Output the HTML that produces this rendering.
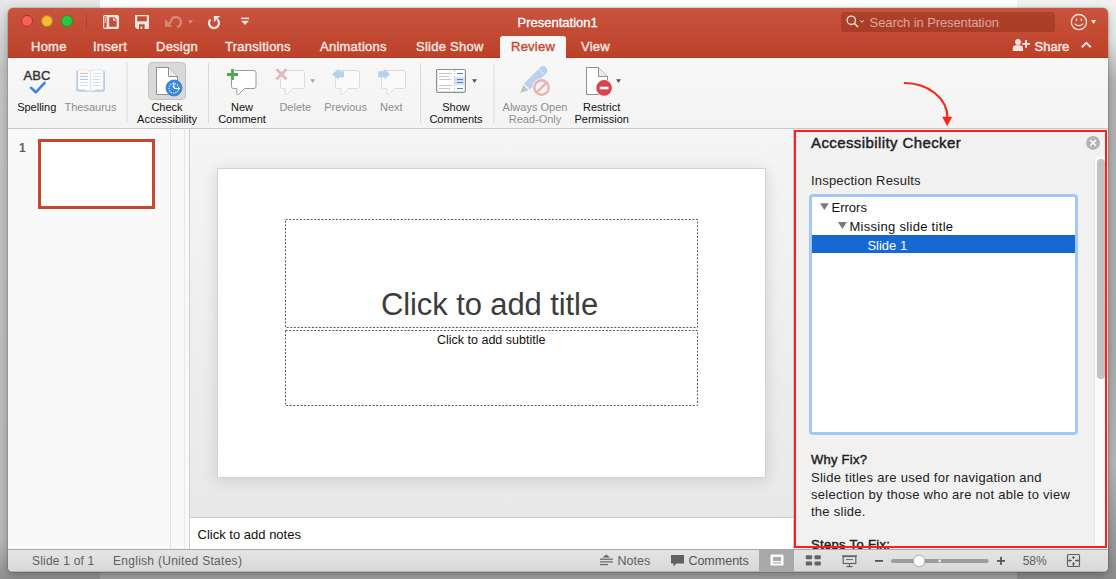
<!DOCTYPE html>
<html><head><meta charset="utf-8">
<style>
*{box-sizing:border-box;margin:0;padding:0}
html,body{width:1116px;height:579px;overflow:hidden;position:relative;font-family:"Liberation Sans",sans-serif;}
body{background:#e9e9e9;}
.a{position:absolute;white-space:nowrap}
#bgL{left:0;top:0;width:100px;height:579px;background:linear-gradient(#e8e8e8 0%,#d8d8d8 5%,#c4c4c4 12%,#bababa 93%,#909090 100%)}
#bgR{left:100px;top:0;width:917px;height:579px;background:linear-gradient(#fefefe 0%,#f6f6f6 20%,#c8c8c8 60%,#a2a2a2 100%)}
#bgR2{left:1017px;top:0;width:99px;height:579px;background:linear-gradient(#f2f2f2 0%,#e6e6e6 7%,#b4b4b4 14%,#acacac 60%,#b6b6b6 80%,#8c8c8c 100%)}
#win{left:8px;top:8px;width:1100px;height:564px;border-radius:5px;overflow:hidden;background:#f4f4f4;box-shadow:0 0 0 0.5px rgba(0,0,0,.22),0 3px 10px rgba(0,0,0,.28)}
#hdr{left:0;top:0;width:1100px;height:50px;background:linear-gradient(#c8543d,#bd4129);border-bottom:1px solid #a9391f}
.tab{top:31px;font-size:13px;font-weight:400;color:#f8e6e0;-webkit-text-stroke:0.4px #f8e6e0;letter-spacing:0.25px}
.rl{font-size:11px;color:#111;text-align:center;line-height:12px}
.dis{color:#8d8d8d}
.sep{width:1px;background:#dcdcdc}
</style></head><body>
<div id="bgL" class="a"></div>
<div id="bgR" class="a"></div>
<div id="bgR2" class="a"></div>
<div id="win" class="a">
  <div id="hdr" class="a"></div>
  <!-- traffic lights -->
  <div class="a" style="left:12.7px;top:6.5px;width:12.5px;height:12.5px;border-radius:50%;background:#fd5d55;border:1px solid #a5372c"></div>
  <div class="a" style="left:32.7px;top:6.5px;width:12.5px;height:12.5px;border-radius:50%;background:#feba2f;border:1px solid #b0822a"></div>
  <div class="a" style="left:52.7px;top:6.5px;width:12.5px;height:12.5px;border-radius:50%;background:#28c73f;border:1px solid #22952f"></div>
  <div class="a" style="left:78px;top:6px;width:1px;height:16px;background:rgba(0,0,0,.12)"></div>
  <div class="a" style="left:509.5px;top:8.1px;font-size:13px;color:#fff;line-height:13px;-webkit-text-stroke:0.3px #fff">Presentation1</div>

  <!-- QAT icons (abs coords minus 8) -->
  <svg class="a" style="left:0;top:0" width="260" height="30" viewBox="8 8 260 30">
    <g fill="#f7e4df">
      <rect x="103" y="15" width="16" height="14" rx="2"/>
    </g>
    <g fill="#c24c35">
      <rect x="104.3" y="16.3" width="2.3" height="11.4"/>
      <path d="M109.2 17.3 H114.4 L116.6 19.5 V26.7 H109.2 Z"/>
    </g>
    <g fill="#f7e4df">
      <circle cx="105.4" cy="17.7" r="0.7"/><circle cx="105.4" cy="19.8" r="0.7"/><circle cx="105.4" cy="21.9" r="0.7"/>
      <path d="M113 17.6 V20 Q113 20.8 113.8 20.8 H116.3 Z"/>
    </g>
    <path fill="#f7e4df" d="M135 16 Q135 15 136 15 H148 Q149 15 149 16 V28 Q149 29 148 29 H137 L135 27 Z"/>
    <g fill="#c24c35">
      <rect x="137.2" y="16.3" width="9.6" height="5"/>
      <rect x="139" y="24.3" width="5.6" height="4.7"/>
    </g>
    <rect x="140.6" y="26.5" width="1.6" height="2.5" fill="#f7e4df"/>
    <g fill="none" stroke="rgba(247,228,223,.38)" stroke-width="2.2">
      <path d="M169.5 23.5 L171 21 A5 5 0 1 1 176.8 27"/>
    </g>
    <path fill="rgba(247,228,223,.38)" d="M165 19 L165 26.7 L172.6 26.7 Z"/>
    <path fill="rgba(247,228,223,.38)" d="M188 20.2 H193 L190.5 24 Z"/>
    <g fill="none" stroke="#f7e4df" stroke-width="2.3">
      <path d="M210.5 19.5 A5 5 0 1 0 217.5 19.5"/>
    </g>
    <path fill="#f7e4df" d="M213.9 15.9 L220.3 15.9 L213.9 22.3 Z"/>
    <rect x="241" y="17.6" width="8" height="1.5" fill="#f7e4df"/>
    <path fill="#f7e4df" d="M241 20.7 H249 L245 25 Z"/>
  </svg>

  <!-- search / share -->
  <div class="a" style="left:833.3px;top:4.2px;width:213.5px;height:19.5px;border-radius:3.5px;background:rgba(110,25,10,.3)"></div>
  <svg class="a" style="left:0;top:0" width="1100" height="50" viewBox="8 8 1100 50">
    <circle cx="851.3" cy="20.3" r="4.2" fill="none" stroke="#f4e2dc" stroke-width="1.3"/>
    <path d="M854.3 23.3 L858 27" stroke="#f4e2dc" stroke-width="1.6"/>
    <path d="M860.2 20.5 L862 22.2 L863.8 20.5" fill="none" stroke="#f4e2dc" stroke-width="1"/>
    <circle cx="1078.9" cy="22.1" r="7.6" fill="none" stroke="#f7e4df" stroke-width="1.3"/>
    <rect x="1075.8" y="18.6" width="1.3" height="2.6" rx="0.6" fill="#f7e4df"/>
    <rect x="1080.7" y="18.6" width="1.3" height="2.6" rx="0.6" fill="#f7e4df"/>
    <path d="M1074.6 23.6 Q1078.9 27.8 1083.2 23.6" fill="none" stroke="#f7e4df" stroke-width="1.2"/>
    <path d="M1091 20 H1096.2 L1093.6 23.9 Z" fill="#f7e4df"/>
    <circle cx="1018" cy="42" r="2.9" fill="#f7e4df"/>
    <path d="M1012.8 51 V48.2 Q1012.8 45.3 1016 45.3 H1019.8 Q1023 45.3 1023 48.2 V51 Z" fill="#f7e4df"/>
    <path d="M1022.2 43.8 H1030 M1026.1 39.9 V47.7" stroke="#f7e4df" stroke-width="1.8"/>
    <path d="M1081.8 47.2 L1086.3 42.8 L1090.8 47.2" fill="none" stroke="#f7e4df" stroke-width="2"/>
  </svg>
  <div class="a" style="left:861.6px;top:7.7px;font-size:13px;color:#e0a596;line-height:13px;letter-spacing:-0.1px">Search in Presentation</div>
  <div class="a" style="left:1026.6px;top:32.4px;font-size:13px;color:#f8e6e0;line-height:13px;-webkit-text-stroke:0.45px #f8e6e0">Share</div>
  <!-- tabs -->
  <div class="a tab" style="left:23px">Home</div>
  <div class="a tab" style="left:85px">Insert</div>
  <div class="a tab" style="left:148px">Design</div>
  <div class="a tab" style="left:217px">Transitions</div>
  <div class="a tab" style="left:312px">Animations</div>
  <div class="a tab" style="left:408px">Slide Show</div>
  <div class="a" style="left:492px;top:28px;width:66px;height:22px;background:#f7f7f7;border-radius:3px 3px 0 0"></div>
  <div class="a tab" style="left:503px;color:#c54a31;-webkit-text-stroke:0.4px #c54a31">Review</div>
  <div class="a tab" style="left:573px">View</div>

  <!-- ribbon -->
  <div id="rib" class="a" style="left:0;top:50px;width:1100px;height:71px;background:linear-gradient(#f7f7f7,#f4f4f4);border-bottom:1px solid #c9c9c9"></div>


  <!-- ribbon content -->
  <svg class="a" style="left:0;top:50px" width="1100" height="70" viewBox="8 58 1100 70">
    <!-- separators -->
    <g fill="#dadada">
      <rect x="126.5" y="63" width="1" height="60"/>
      <rect x="208" y="63" width="1" height="60"/>
      <rect x="420" y="63" width="1" height="60"/>
      <rect x="493.5" y="63" width="1" height="60"/>
    </g>
    <!-- spelling check -->
    <path d="M31 87.8 L35.8 92.3 L44.5 83" fill="none" stroke="#3f86d6" stroke-width="2.6" stroke-linecap="round" stroke-linejoin="round"/>
    <!-- thesaurus -->
    <rect x="76.2" y="70.5" width="28.8" height="21.2" rx="2" fill="#b9cde6"/>
    <path d="M78 70 Q84 69 90.4 71 Q97 69 103.2 70 V89.8 Q97 89 90.4 91.2 Q84 89 78 89.8 Z" fill="#fdfdfd" stroke="#d7dbe0" stroke-width="0.6"/>
    <line x1="90.4" y1="71" x2="90.4" y2="91" stroke="#d0d4da" stroke-width="0.8"/>
    <g stroke-width="1">
      <line x1="80" y1="73.4" x2="88" y2="73.4" stroke="#e3a9ad"/>
      <line x1="80" y1="76.4" x2="88" y2="76.4" stroke="#aac4e6"/>
      <line x1="80" y1="79.4" x2="88" y2="79.4" stroke="#aac4e6"/>
      <line x1="80" y1="82.4" x2="88" y2="82.4" stroke="#dcdcdc"/>
      <line x1="80" y1="85.4" x2="88" y2="85.4" stroke="#dcdcdc"/>
      <line x1="93" y1="73.4" x2="101" y2="73.4" stroke="#dcdcdc"/>
      <line x1="93" y1="76.4" x2="101" y2="76.4" stroke="#dcdcdc"/>
      <line x1="93" y1="79.4" x2="101" y2="79.4" stroke="#dcdcdc"/>
      <line x1="93" y1="82.4" x2="101" y2="82.4" stroke="#dcdcdc"/>
      <line x1="93" y1="85.4" x2="101" y2="85.4" stroke="#dcdcdc"/>
    </g>
    <!-- check accessibility -->
    <rect x="148.5" y="62.5" width="37" height="37" rx="4" fill="#d9d9d9" stroke="#c2c2c2" stroke-width="1"/>
    <path d="M156.5 67.5 H168.5 L177.5 76.5 V94.5 H156.5 Z" fill="#fff" stroke="#8f8f8f" stroke-width="1"/>
    <path d="M168.5 67.5 V76.5 H177.5" fill="#eee" stroke="#8f8f8f" stroke-width="1"/>
    <circle cx="174" cy="88" r="8" fill="#3b8ad9" stroke="#2f78c4" stroke-width="0.8"/>
    <circle cx="173.8" cy="88.3" r="4.8" fill="none" stroke="#fff" stroke-width="1.1" stroke-dasharray="1.3 1" stroke-opacity="0.85"/>
    <path d="M173.8 82.2 V88" fill="none" stroke="#fff" stroke-width="1.1"/>
    <path d="M172.3 86.4 L173.8 88.4 L175.3 86.4 Z" fill="#fff"/>
    <path d="M174 88.5 H179.2" fill="none" stroke="#fff" stroke-width="1.1"/>
    <path d="M178.2 86.8 L180.4 88.5 L178.2 90.2 Z" fill="#fff"/>
    <!-- bubbles -->
    <g fill="#fff" stroke="#9b9b9b" stroke-width="1">
      <path d="M233.5 70.5 H254 Q256 70.5 256 72.5 V86.5 Q256 88.5 254 88.5 H244.5 L238.5 94.5 Q237 95 236.8 93.5 V88.5 H233.5 Q231.5 88.5 231.5 86.5 V72.5 Q231.5 70.5 233.5 70.5 Z"/>
    </g>
    <g fill="#fafafa" stroke="#dcdcdc" stroke-width="1">
      <path d="M282.5 70.5 H302.5 Q304.5 70.5 304.5 72.5 V86.5 Q304.5 88.5 302.5 88.5 H293 L287 94.5 Q285.5 95 285.3 93.5 V88.5 H282.5 Q280.5 88.5 280.5 86.5 V72.5 Q280.5 70.5 282.5 70.5 Z"/>
      <path d="M337.5 70.5 H357.5 Q359.5 70.5 359.5 72.5 V86.5 Q359.5 88.5 357.5 88.5 H348.5 L342.5 94.5 Q341 95 340.8 93.5 V88.5 H337.5 Q335.5 88.5 335.5 86.5 V72.5 Q335.5 70.5 337.5 70.5 Z"/>
      <path d="M383.5 70.5 H403.5 Q405.5 70.5 405.5 72.5 V86.5 Q405.5 88.5 403.5 88.5 H394.5 L388.5 94.5 Q387 95 386.8 93.5 V88.5 H383.5 Q381.5 88.5 381.5 86.5 V72.5 Q381.5 70.5 383.5 70.5 Z"/>
    </g>
    <!-- green plus -->
    <g stroke="#fff" stroke-width="5"><line x1="227" y1="74.5" x2="238" y2="74.5"/><line x1="232.5" y1="69" x2="232.5" y2="80"/></g>
    <g stroke="#4da84d" stroke-width="2.8"><line x1="227" y1="74.5" x2="238" y2="74.5"/><line x1="232.5" y1="69" x2="232.5" y2="80"/></g>
    <!-- pink X -->
    <g stroke="#f7f7f7" stroke-width="4.5"><line x1="276.5" y1="69.3" x2="286.5" y2="79.3"/><line x1="286.5" y1="69.3" x2="276.5" y2="79.3"/></g>
    <g stroke="#e9b5b8" stroke-width="2.8"><line x1="276.5" y1="69.3" x2="286.5" y2="79.3"/><line x1="286.5" y1="69.3" x2="276.5" y2="79.3"/></g>
    <path d="M310.2 79.2 H315.2 L312.7 82.9 Z" fill="#a8a8a8"/>
    <!-- prev/next arrows -->
    <path d="M332 74.3 L338.7 68.8 V71.3 H344 V77.3 H338.7 V79.8 Z" fill="#b6d0ee"/>
    <path d="M390.1 74.3 L384.4 68.8 V71.3 H378.2 V77.3 H384.4 V79.8 Z" fill="#b6d0ee"/>
    <!-- show comments -->
    <rect x="436.6" y="69.5" width="28.8" height="22.8" rx="1.5" fill="#fff" stroke="#8e8e8e" stroke-width="1.2"/>
    <rect x="454.5" y="77.3" width="10.5" height="7.5" fill="#cfe0f5"/>
    <line x1="454.5" y1="70" x2="454.5" y2="92" stroke="#a0a0a0" stroke-width="0.6" stroke-dasharray="1.5 1.5"/>
    <g stroke="#c6c6c6" stroke-width="1">
      <line x1="439" y1="73.5" x2="452" y2="73.5"/><line x1="439" y1="76.5" x2="449" y2="76.5"/>
      <line x1="439" y1="79.5" x2="451" y2="79.5"/><line x1="439" y1="85.5" x2="452" y2="85.5"/>
      <line x1="439" y1="88.5" x2="450" y2="88.5"/>
    </g>
    <g stroke="#3f86d6" stroke-width="1.1">
      <line x1="457" y1="73.5" x2="463" y2="73.5"/><line x1="457" y1="79.5" x2="463" y2="79.5"/>
      <line x1="457" y1="82.5" x2="463" y2="82.5"/><line x1="457" y1="88.5" x2="463" y2="88.5"/>
    </g>
    <path d="M472 79.2 H477 L474.5 82.9 Z" fill="#555"/>
    <!-- pencil -->
    <path d="M524.5 83.5 L540.5 67.5 Q543.5 65 546 67.8 Q548.5 70.5 546 73.2 L530 89 Z" fill="#b9d3ef" stroke="#a9c4e4" stroke-width="0.5"/>
    <line x1="538.8" y1="69.2" x2="544.3" y2="74.7" stroke="#eef3f8" stroke-width="1"/>
    <line x1="523.8" y1="84.2" x2="529.3" y2="89.7" stroke="#eef3f8" stroke-width="1"/>
    <path d="M523.3 84.9 L528.6 90.2 L520.2 93 Z" fill="#c4c4c4"/>
    <circle cx="541.5" cy="87.6" r="9.3" fill="#f7f7f7"/>
    <circle cx="541.5" cy="87.6" r="7.2" fill="#f5f5f5" stroke="#ebb5b8" stroke-width="2.6"/>
    <line x1="546.5" y1="82.6" x2="536.5" y2="92.6" stroke="#ebb5b8" stroke-width="2.6"/>
    <!-- restrict permission -->
    <path d="M586.5 67.5 H598.5 L607.5 76.5 V94.5 H586.5 Z" fill="#fff" stroke="#8f8f8f" stroke-width="1"/>
    <path d="M598.5 67.5 V76.5 H607.5" fill="#ececec" stroke="#8f8f8f" stroke-width="1"/>
    <circle cx="604.1" cy="87.9" r="8.5" fill="#f7f7f7"/>
    <circle cx="604.1" cy="87.9" r="7.8" fill="#d9434b"/>
    <rect x="599.7" y="86.7" width="8.8" height="2.6" fill="#fff"/>
    <path d="M616 79.2 H621 L618.5 82.9 Z" fill="#555"/>
  </svg>
  <div class="a" style="left:15.6px;top:61.2px;font-size:13px;color:#333;line-height:13px;-webkit-text-stroke:0.4px #333">ABC</div>
  <div class="a rl" style="left:-11.3px;top:93px;width:80px">Spelling</div>
  <div class="a rl dis" style="left:42.5px;top:93px;width:80px">Thesaurus</div>
  <div class="a rl" style="left:119px;top:93px;width:80px">Check<br>Accessibility</div>
  <div class="a rl" style="left:194px;top:93px;width:80px">New<br>Comment</div>
  <div class="a rl dis" style="left:247.3px;top:93px;width:80px">Delete</div>
  <div class="a rl dis" style="left:297.6px;top:93px;width:80px">Previous</div>
  <div class="a rl dis" style="left:343.3px;top:93px;width:80px">Next</div>
  <div class="a rl" style="left:408px;top:93px;width:80px">Show<br>Comments</div>
  <div class="a rl dis" style="left:487px;top:93px;width:80px">Always Open<br>Read-Only</div>
  <div class="a rl" style="left:553.7px;top:93px;width:80px">Restrict<br>Permission</div>
  <!-- main -->
  <div class="a" style="left:0;top:121px;width:163px;height:420px;background:#f9f9f9"></div>
  <div class="a" style="left:162px;top:121px;width:1px;height:420px;background:#e2e2e2"></div>
  <div class="a" style="left:163px;top:121px;width:18px;height:420px;background:#f9f9f9"></div>
  <div class="a" style="left:176px;top:121px;width:1px;height:420px;background:#e8e8e8"></div>
  <div class="a" style="left:181px;top:121px;width:1px;height:420px;background:#cfcfcf"></div>
  <div class="a" style="left:182px;top:121px;width:603px;height:388px;background:linear-gradient(#f5f5f5,#e8e8e8)"></div>
  <div class="a" style="left:182px;top:509px;width:603px;height:32px;background:#fff;border-top:1px solid #c9c9c9"></div>
  <div class="a" style="left:785px;top:121px;width:315px;height:420px;background:#f1f1f1;border-left:1px solid #c9c9c9"></div>


  <!-- thumbnails -->
  <div class="a" style="left:11px;top:134px;font-size:12px;font-weight:700;color:#5c5c5c;line-height:12px">1</div>
  <div class="a" style="left:30px;top:131px;width:117px;height:70px;border:3px solid #c8452e;background:#fff"></div>
  <!-- slide -->
  <div class="a" style="left:209px;top:160px;width:549px;height:310px;background:#fff;border:1px solid #d2d2d2;box-shadow:0 2px 14px rgba(0,0,0,.13)"></div>
  <svg class="a" style="left:0;top:0" width="1100" height="564" viewBox="8 8 1100 564">
    <g fill="none" stroke="#5a5a5a" stroke-width="1" stroke-dasharray="2 1.6">
      <rect x="285.5" y="219.5" width="412" height="108"/>
      <rect x="285.5" y="330.5" width="412" height="75"/>
    </g>
  </svg>
  <div id="ttl" class="a" style="left:373px;top:281px;font-size:31px;color:#3c3c3c;line-height:31px;letter-spacing:-0.1px">Click to add title</div>
  <div id="sub" class="a" style="left:429px;top:326px;font-size:12.5px;color:#111;line-height:12px">Click to add subtitle</div>
  <div class="a" style="left:189.6px;top:520px;font-size:13px;color:#111;line-height:13px">Click to add notes</div>

  <!-- accessibility panel -->
  <div class="a" style="left:803px;top:128px;font-size:15px;color:#222;line-height:14px;letter-spacing:0.4px;-webkit-text-stroke:0.45px #222">Accessibility Checker</div>
  <svg class="a" style="left:1077px;top:127px" width="16" height="16" viewBox="0 0 16 16">
    <circle cx="8.1" cy="7.9" r="7" fill="#b4b4b4"/>
    <path d="M5.3 5.1 L10.9 10.7 M10.9 5.1 L5.3 10.7" stroke="#fff" stroke-width="1.6"/>
  </svg>
  <div class="a" style="left:1086px;top:148px;width:11px;height:392px;background:#fafafa;border-left:1px solid #e6e6e6"></div>
  <div class="a" style="left:1089px;top:151px;width:7.5px;height:220px;background:#c2c2c2;border-radius:4px"></div>
  <div class="a" style="left:803px;top:166px;font-size:13px;color:#222;line-height:13px;letter-spacing:0.2px">Inspection Results</div>
  <div class="a" style="left:800.6px;top:185.6px;width:269.4px;height:241px;border:3.4px solid #a3c8f4;border-radius:4px;background:#fff"></div>
  <div class="a" style="left:804px;top:227px;width:262.5px;height:17.5px;background:#1868d1"></div>
  <svg class="a" style="left:800px;top:190px" width="60" height="40" viewBox="808 198 60 40">
    <path d="M820 203.3 H828.8 L824.4 210 Z" fill="#7a7a7a"/>
    <path d="M838 222 H846.8 L842.4 229 Z" fill="#7a7a7a"/>
  </svg>
  <div class="a" style="left:823.5px;top:193px;font-size:13px;color:#111;line-height:13px">Errors</div>
  <div class="a" style="left:841.4px;top:212px;font-size:13px;color:#111;line-height:13px;letter-spacing:0.3px">Missing slide title</div>
  <div class="a" style="left:859.4px;top:230.5px;font-size:13px;color:#fff;line-height:13px">Slide 1</div>
  <div class="a" style="left:803px;top:445px;font-size:13px;color:#222;line-height:13px;letter-spacing:0.25px;-webkit-text-stroke:0.45px #222">Why Fix?</div>
  <div class="a" style="left:803px;top:460.8px;font-size:13px;color:#222;line-height:17px;letter-spacing:0.26px">Slide titles are used for navigation and<br>selection by those who are not able to view<br>the slide.</div>
  <div class="a" style="left:803px;top:530px;font-size:13px;color:#222;line-height:13px;letter-spacing:0.33px;-webkit-text-stroke:0.45px #222">Steps To Fix:</div>
  <!-- status -->
  <div class="a" style="left:0;top:541px;width:1100px;height:23px;background:linear-gradient(#e4e4e4,#d8d8d8);border-top:1px solid #a9a9a9;box-shadow:inset 0 -1px 0 #b4b4b4"></div>

  <div class="a" style="left:24px;top:547px;font-size:12px;color:#606060;line-height:12px;letter-spacing:0.2px">Slide 1 of 1</div>
  <div class="a" style="left:105px;top:547px;font-size:12px;color:#606060;line-height:12px;letter-spacing:0.28px">English (United States)</div>
  <div class="a" style="left:751px;top:542px;width:35px;height:22px;background:#a9a9a9"></div>
  <svg class="a" style="left:0;top:541px" width="1100" height="23" viewBox="8 549 1100 23">
    <!-- notes icon -->
    <g fill="#666">
      <path d="M602.5 557.5 L606.3 554.5 L610 557.5 Z"/>
      <rect x="600" y="558.6" width="13" height="1.2"/>
      <rect x="600" y="561.3" width="13" height="1.2"/>
      <rect x="600" y="564" width="8" height="1.2"/>
    </g>
    <!-- comments icon -->
    <path d="M671 555 H684 V563.5 H676.5 L673.5 566.5 V563.5 H671 Z" fill="#616161"/>
    <!-- normal view icon -->
    <rect x="770.5" y="554.5" width="13" height="11" rx="1.2" fill="#fff"/>
    <rect x="773" y="557" width="8" height="4" fill="#a9a9a9"/>
    <rect x="773" y="562.3" width="8" height="1.2" fill="#a9a9a9"/>
    <!-- sorter -->
    <g fill="#646464">
      <rect x="805.8" y="555.3" width="6.3" height="4" rx="1"/><rect x="814.5" y="555.3" width="6.3" height="4" rx="1"/>
      <rect x="805.8" y="561.6" width="6.3" height="4" rx="1"/><rect x="814.5" y="561.6" width="6.3" height="4" rx="1"/>
    </g>
    <!-- presenter -->
    <g fill="none" stroke="#646464" stroke-width="1.2">
      <rect x="843.2" y="556.5" width="12.6" height="7"/>
      <line x1="849.5" y1="563.5" x2="849.5" y2="566.5"/>
      <line x1="846.5" y1="566.6" x2="852.5" y2="566.6"/>
      <line x1="846" y1="559.6" x2="853" y2="559.6" stroke-width="1"/>
    </g>
    <rect x="842" y="555.3" width="15" height="1.4" fill="#646464"/>
    <!-- zoom -->
    <rect x="875" y="560" width="8" height="1.8" fill="#555"/>
    <rect x="891" y="558.9" width="97.7" height="4" rx="2" fill="#9c9c9c"/>
    <circle cx="939.8" cy="560.9" r="1.3" fill="#f2f2f2"/>
    <circle cx="919.1" cy="560.9" r="5.8" fill="#fff" stroke="#9a9a9a" stroke-width="0.8"/>
    <rect x="997" y="560" width="8" height="1.8" fill="#555"/>
    <rect x="1000.1" y="556.9" width="1.8" height="8" fill="#555"/>
    <!-- fit -->
    <rect x="1067.5" y="554.5" width="12" height="12" rx="1" fill="none" stroke="#606060" stroke-width="1.2"/>
    <g stroke="#606060" stroke-width="1.1" fill="none">
      <path d="M1073.5 556.5 V559 M1073.5 562 V566 M1068 560.5 H1072 M1075 560.5 H1079"/>
    </g>
    <g fill="#606060">
      <path d="M1071.8 558 L1073.5 555.8 L1075.2 558 Z M1071.8 563.6 L1073.5 565.8 L1075.2 563.6 Z M1070.3 558.8 L1068.2 560.5 L1070.3 562.2 Z M1076.7 558.8 L1078.8 560.5 L1076.7 562.2 Z"/>
    </g>
  </svg>
  <div class="a" style="left:609.5px;top:547px;font-size:12.5px;color:#606060;line-height:13px">Notes</div>
  <div class="a" style="left:680.4px;top:547px;font-size:12.5px;color:#555;line-height:13px">Comments</div>
  <div class="a" style="left:1014.7px;top:547px;font-size:12px;color:#606060;line-height:12px">58%</div>
</div>

<div class="a" style="left:794px;top:130px;width:313px;height:418px;border:2px solid #ff1d1d"></div>
<svg class="a" style="left:0;top:0" width="1116" height="579" viewBox="0 0 1116 579">
  <path d="M904 83 C928 83 947.5 98 947.5 118" fill="none" stroke="#ff2414" stroke-width="2.2"/>
  <path d="M942.2 116.8 H952.2 L947.2 126.2 Z" fill="#ff2414"/>
</svg>
</body></html>
